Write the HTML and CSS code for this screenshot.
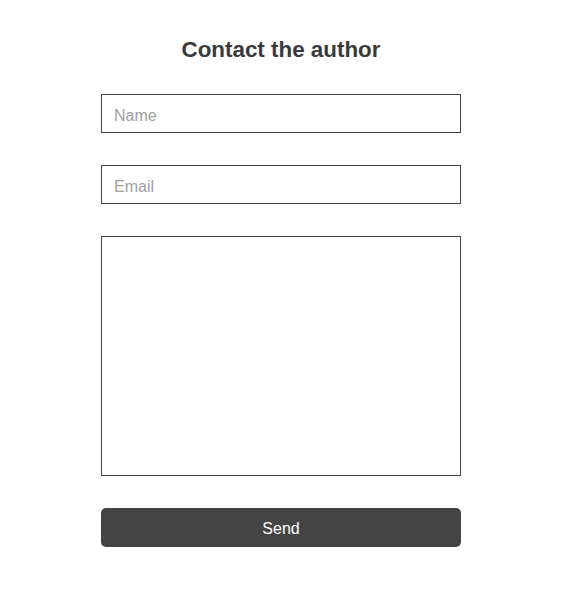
FILE: index.html
```html
<!DOCTYPE html>
<html>
<head>
<meta charset="utf-8">
<link rel="stylesheet" href="styles.css">
</head>
<body>
<div class="page">
  <form class="contact">
    <h1 class="title">Contact the author</h1>
    <input class="field" type="text" placeholder="Name">
    <input class="field" type="email" placeholder="Email">
    <textarea class="field message"></textarea>
    <button class="send" type="button">Send</button>
  </form>
</div>
</body>
</html>
```

FILE: styles.css
```css
html, body {
  margin: 0;
  padding: 0;
  background: #fff;
}
body {
  font-family: "Liberation Sans", Arial, sans-serif;
}
.page {
  width: 562px;
  padding-top: 37px;
}
.contact {
  width: 360px;
  margin: 0 auto;
  display: flex;
  flex-direction: column;
  gap: 31px;
}
.title {
  margin: 0;
  font-size: 22.4px;
  line-height: 26px;
  font-weight: bold;
  color: #3a3a3a;
  text-align: center;
}
.field {
  box-sizing: border-box;
  width: 360px;
  height: 39px;
  margin: 0;
  border: 1px solid #444;
  border-radius: 0;
  padding: 4px 12px 0;
  font-family: "Liberation Sans", Arial, sans-serif;
  font-size: 16px;
  color: #333;
  background: #fff;
  outline: none;
}
.contact .field + .field {
  margin-top: 1px;
}
.field::placeholder {
  color: #a0a0a0;
}
.message {
  height: 240px;
  resize: none;
  padding: 10px 12px;
}
.send {
  height: 39px;
  margin-top: 1px;
  border: none;
  border-radius: 5px;
  background: #444;
  color: #fff;
  padding: 2px 0 0;
  font-family: "Liberation Sans", Arial, sans-serif;
  font-size: 16px;
  cursor: pointer;
}
```
